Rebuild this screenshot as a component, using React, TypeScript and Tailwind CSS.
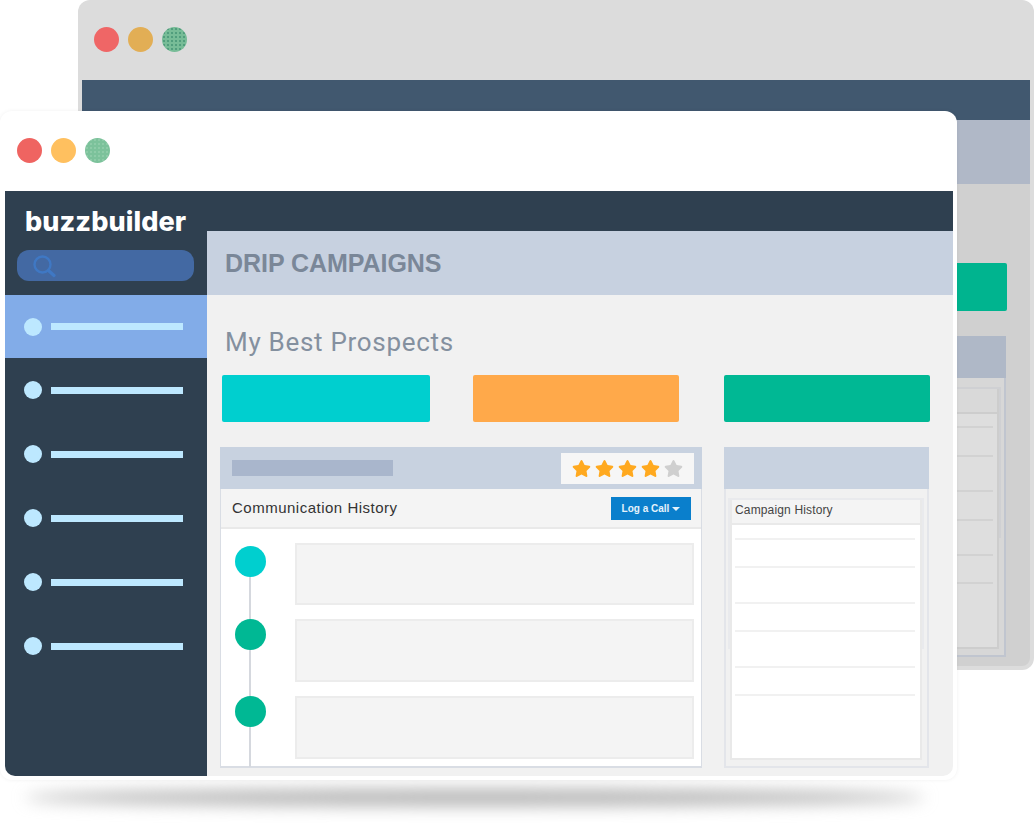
import { FaStar } from "react-icons/fa";

const navRows = [0, 1, 2, 3, 4, 5];
const timeline = ["bg-[#00cfcf]", "bg-[#00b894]", "bg-[#00b894]"];
// row heights between the divider lines are uneven in the picture
const historyRows = ["h-[15px]", "h-[28px]", "h-[36px]", "h-[28px]", "h-[36px]", "h-[28px]"];
const backRows = ["h-[14px]", "h-[29px]", "h-[35px]", "h-[29px]", "h-[35px]", "h-[28px]"];

function Dots({ red, amber, green }: { red: string; amber: string; green: string }) {
  return (
    <div className="mb-[2px] flex gap-[9px]">
      <span className={`h-[25px] w-[25px] rounded-full ${red}`} />
      <span className={`h-[25px] w-[25px] rounded-full ${amber}`} />
      <span className={`h-[25px] w-[25px] rounded-full ${green}`} />
    </div>
  );
}

function Sidebar() {
  return (
    <aside className="flex w-[202px] shrink-0 flex-col rounded-bl-[10px] bg-[#2f4050]">
      <div className="pl-[20px] pt-[15px] font-['Inter',sans-serif] text-[27px] font-extrabold leading-[32px] tracking-[0.1px] text-white">
        buzzbuilder
      </div>
      <div className="ml-[12px] mt-[12px] flex h-[31px] w-[177px] items-center rounded-[12px] bg-[#4369a3] pl-[15px]">
        <svg width="24" height="24" viewBox="0 0 24 24" fill="none" stroke="#3f78c4" strokeWidth="2.4" strokeLinecap="round">
          <circle cx="10.5" cy="10.5" r="8" />
          <path d="M16.5 16.5 22 21.5" strokeWidth="3.2" />
        </svg>
      </div>
      <nav className="mt-[14px] flex flex-col">
        {navRows.map((row) => (
          <div
            key={row}
            className={`flex items-center gap-[9px] pl-[19px] ${row === 0 ? "h-[63px] bg-[#82ace8]" : "h-[64px]"}`}
          >
            <span className="h-[18px] w-[18px] rounded-full bg-[#bde8ff]" />
            <span className="h-[7px] w-[132px] bg-[#bde8ff]" />
          </div>
        ))}
      </nav>
    </aside>
  );
}

function CommunicationPanel() {
  return (
    <section className="flex h-[321px] w-[482px] flex-col">
      <div className="flex h-[42px] shrink-0 items-center justify-between bg-[#c8d2e0] pl-[12px] pr-[8px]">
        <span className="h-[16px] w-[161px] bg-[#a9b6cc]" />
        <div className="flex h-[31px] w-[133px] items-center justify-center gap-[4px] bg-[#f6f6f6]">
          {[0, 1, 2, 3].map((star) => (
            <FaStar key={star} className="h-[19px] w-[19px] text-[#ffa91f]" />
          ))}
          <FaStar className="h-[19px] w-[19px] text-[#cfcfcf]" />
        </div>
      </div>
      <div className="flex min-h-0 flex-1 flex-col border-x border-b-2 border-[#d9dde4] bg-white">
        <div className="flex h-[40px] shrink-0 items-center justify-between border-b-2 border-[#e9e9e9] bg-[#f4f4f4] pl-[11px] pr-[10px]">
          <span className="font-['Liberation_Sans',sans-serif] text-[15px] tracking-[0.5px] text-[#333]">
            Communication History
          </span>
          <button className="flex h-[23px] w-[80px] items-center justify-center gap-[3px] bg-[#0a7fcc] font-['Liberation_Sans',sans-serif] text-[10px] font-bold text-[#e4f2fb]">
            Log a Call
            <svg width="8" height="4" viewBox="0 0 8 4" className="mt-[2px]">
              <path d="M0 0h8L4 4z" fill="#e4f2fb" />
            </svg>
          </button>
        </div>
        <div className="relative flex min-h-0 flex-1 gap-[29px] pl-[14px] pr-[7px] pt-[14px]">
          <div className="relative flex w-[31px] shrink-0 flex-col">
            <span className="absolute -bottom-px left-[14px] top-[16px] w-[2px] bg-[#d5d8de]" />
            {timeline.map((color, i) => (
              <span
                key={i}
                className={`relative h-[31px] w-[31px] shrink-0 rounded-full ${color} ${i === 0 ? "mt-[3px]" : i === 1 ? "mt-[42px]" : "mt-[46px]"}`}
              />
            ))}
          </div>
          <div className="flex flex-1 flex-col gap-[14px]">
            <div className="h-[62px] border-2 border-[#ececec] bg-[#f4f4f4]" />
            <div className="h-[63px] border-2 border-[#ececec] bg-[#f4f4f4]" />
            <div className="h-[63px] border-2 border-[#ececec] bg-[#f4f4f4]" />
          </div>
        </div>
      </div>
    </section>
  );
}

function CampaignPanel() {
  return (
    <section className="flex h-[321px] w-[205px] flex-col">
      <div className="h-[42px] shrink-0 bg-[#c8d2e0]" />
      <div className="relative flex flex-1 flex-col border-x-2 border-b-2 border-[#e3e5ea] bg-[#f1f1f1] pb-[6px] pl-[4px] pr-[5px] pt-[11px]">
        <span className="absolute left-[2px] right-[3px] top-[9px] h-[151px] border-x-2 border-t-2 border-[#e9eaed]" />
        <div className="relative flex flex-1 flex-col border-2 border-t-0 border-[#e9e9e9] bg-white">
          <div className="flex h-[25px] shrink-0 items-center border-b-2 border-[#e9e9e9] bg-[#f4f4f4] pb-[4px] pl-[3px] font-['Liberation_Sans',sans-serif] text-[12px] tracking-[0.15px] text-[#444]">
            Campaign History
          </div>
          <div className="flex flex-col pl-[3px] pr-[5px]">
            {historyRows.map((height, i) => (
              <div key={i} className={`${height} border-b-2 border-[#f1f1f1]`} />
            ))}
          </div>
        </div>
      </div>
    </section>
  );
}

function FrontWindow() {
  return (
    <div className="absolute left-0 top-[111px] flex h-[669px] w-[957px] flex-col rounded-[12px] bg-white pb-[4px] pl-[5px] pr-[4px] shadow-[0_0_4px_rgba(0,0,0,0.06)]">
      <div className="flex h-[80px] shrink-0 items-center pl-[12px]">
        <Dots
          red="bg-[#ef6461]"
          amber="bg-[#ffc05f]"
          green="bg-[#7cc29b] bg-[radial-gradient(#8fcca9_0.7px,transparent_0.8px)] bg-[length:4px_4px]"
        />
      </div>
      <div className="flex min-h-0 flex-1">
        <Sidebar />
        <main className="flex min-w-0 flex-1 flex-col rounded-br-[10px] bg-[#f1f1f1]">
          <div className="h-[40px] shrink-0 bg-[#2f4050]" />
          <div className="flex h-[64px] shrink-0 items-center bg-[#c7d1e0] pl-[18px] pt-[1px] font-['Liberation_Sans',sans-serif] text-[25px] font-bold tracking-[-0.05px] text-[#7a8798]">
            DRIP CAMPAIGNS
          </div>
          <h2 className="ml-[18px] mt-[29px] font-['Roboto',sans-serif] text-[26px] leading-[36px] tracking-[0.7px] text-[#84909f]">
            My Best Prospects
          </h2>
          <div className="mt-[15px] flex pl-[15px]">
            <div className="h-[47px] w-[208px] rounded-[2px] bg-[#00cfcf]" />
            <div className="ml-[43px] h-[47px] w-[206px] rounded-[2px] bg-[#ffa94a]" />
            <div className="ml-[45px] h-[47px] w-[206px] rounded-[2px] bg-[#00b894]" />
          </div>
          <div className="mt-[25px] flex gap-[22px] pl-[13px]">
            <CommunicationPanel />
            <CampaignPanel />
          </div>
        </main>
      </div>
    </div>
  );
}

// only what sticks out from behind the front window is drawn
function BackWindow() {
  return (
    <div className="absolute left-[78px] top-0 flex h-[670px] w-[956px] flex-col rounded-[12px] bg-[#dcdcdc] pb-[4px] pl-[4px] pr-[4px]">
      <div className="flex h-[80px] shrink-0 items-center pl-[12px]">
        <Dots
          red="bg-[#ef6666]"
          amber="bg-[#e2ae55]"
          green="bg-[#77bc97] bg-[radial-gradient(#4f9c7b_0.7px,transparent_0.8px)] bg-[length:4px_4px]"
        />
      </div>
      <div className="h-[40px] shrink-0 bg-[#41586f]" />
      <div className="h-[64px] shrink-0 bg-[#b0b8c7]" />
      <div className="flex min-h-0 flex-1 flex-col items-end rounded-b-[8px] bg-[#d0d0d0] pr-[23px]">
        <div className="mt-[79px] h-[48px] w-[206px] rounded-[2px] bg-[#00b48f]" />
        <section className="mr-[1px] mt-[25px] flex h-[321px] w-[205px] flex-col">
          <div className="h-[42px] shrink-0 bg-[#afb8c7]" />
          <div className="relative flex flex-1 flex-col border-x-2 border-b-2 border-[#c0c5cf] bg-[#d7d7d7] pb-[6px] pl-[5px] pr-[5px] pt-[11px]">
            <span className="absolute left-[2px] right-[3px] top-[9px] h-[151px] border-x-2 border-t-2 border-[#cfd0d3]" />
            <div className="relative flex flex-1 flex-col border-2 border-t-0 border-[#cdcdcd] bg-[#dedede]">
              <div className="h-[25px] shrink-0 border-b-2 border-[#cdcdcd] bg-[#d9d9d9]" />
              <div className="flex flex-col px-[4px]">
                {backRows.map((height, i) => (
                  <div key={i} className={`${height} border-b-2 border-[#d2d2d2]`} />
                ))}
              </div>
            </div>
          </div>
        </section>
      </div>
    </div>
  );
}

export default function App() {
  return (
    <div className="relative h-[823px] w-[1034px] overflow-hidden bg-white">
      <BackWindow />
      <div className="absolute left-[25px] top-[789px] h-[17px] w-[900px] rounded-[50%] bg-[#b4b4b4] blur-[8px]" />
      <FrontWindow />
    </div>
  );
}
